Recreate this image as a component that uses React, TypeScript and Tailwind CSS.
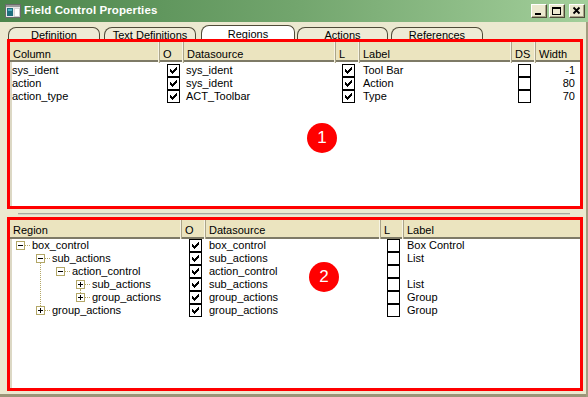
import React from "react";

type Row1 = { col: string; o: boolean; ds: string; l: boolean; label: string; dsb: boolean; width: string };

const columnRows: Row1[] = [
  { col: "sys_ident", o: true, ds: "sys_ident", l: true, label: "Tool Bar", dsb: false, width: "-1" },
  { col: "action", o: true, ds: "sys_ident", l: true, label: "Action", dsb: false, width: "80" },
  { col: "action_type", o: true, ds: "ACT_Toolbar", l: true, label: "Type", dsb: false, width: "70" },
];

type TreeRow = { level: number; open: boolean; name: string; ds: string; label: string };

const treeRows: TreeRow[] = [
  { level: 0, open: true, name: "box_control", ds: "box_control", label: "Box Control" },
  { level: 1, open: true, name: "sub_actions", ds: "sub_actions", label: "List" },
  { level: 2, open: true, name: "action_control", ds: "action_control", label: "" },
  { level: 3, open: false, name: "sub_actions", ds: "sub_actions", label: "List" },
  { level: 3, open: false, name: "group_actions", ds: "group_actions", label: "Group" },
  { level: 1, open: false, name: "group_actions", ds: "group_actions", label: "Group" },
];

const CHECK = ["......X", ".....XX", "X...XXX", "XX.XXX.", "XXXXX..", ".XXX...", "..X...."];

const Check = ({ on }: { on: boolean }) => (
  <span className="w-[13px] h-[13px] border border-black bg-white block">
    {on && (
      <svg width="11" height="11" viewBox="0 0 11 11" shapeRendering="crispEdges">
        {CHECK.flatMap((line, y) =>
          line.split("").map((c, x) => (c === "X" ? <rect key={`${x}-${y}`} x={x + 2} y={y + 2} width="1" height="1" fill="#000" /> : null))
        )}
      </svg>
    )}
  </span>
);

const Expander = ({ open }: { open: boolean }) => (
  <span className="w-[9px] h-[9px] border border-[#b3a767] bg-white relative block shrink-0">
    <span className="absolute left-[1px] top-[3px] w-[5px] h-[1px] bg-black" />
    {!open && <span className="absolute left-[3px] top-[1px] w-[1px] h-[5px] bg-black" />}
  </span>
);

const HeadCell = ({ children, last, pt = "pt-[1px]" }: { children?: React.ReactNode; last?: boolean; pt?: string }) => (
  <div className={`h-full flex items-center pl-[3px] ${pt} ${last ? "" : "border-r border-[#aba489] shadow-[inset_-1px_0_0_#f7f4e4]"}`}>
    {children}
  </div>
);

const Tab = ({ label, w, active }: { label: string; w: string; active?: boolean }) => (
  <div
    className={`${w} flex justify-center border border-b-0 border-[#4f4b38] rounded-tl-[8px] rounded-tr-[7px] ${
      active ? "h-[14px] bg-white pt-[2px]" : "h-[12px] bg-[#eeebd6] pt-[1px]"
    }`}
  >
    <span className="leading-[12px]">{label}</span>
  </div>
);

const TitleButton = ({ children }: { children: React.ReactNode }) => (
  <div className="w-[16px] h-[14px] bg-[#ece9d0] border border-t-white border-l-white border-r-[#4e4b3a] border-b-[#4e4b3a] shadow-[inset_-1px_-1px_0_#a9a487] relative">
    {children}
  </div>
);

export default function App() {
  return (
    <div className="w-[588px] h-[397px] overflow-hidden relative bg-[#ece9d0] text-[11px] text-black font-['Liberation_Sans',Arial,sans-serif] flex flex-col">
      {/* title bar */}
      <div className="h-[22px] shrink-0 flex items-center bg-gradient-to-r from-[#4b854b] via-[#72a56d] to-[#a3cf9b]">
        <svg width="16" height="14" viewBox="0 0 16 14" className="ml-[5px]" shapeRendering="crispEdges">
          <rect x="0.5" y="0.5" width="15" height="13" fill="#e8e8e8" stroke="#6a6a6a" />
          <rect x="1" y="1" width="14" height="2" fill="#9a9a9a" />
          <rect x="2" y="4" width="6" height="8" fill="#1f6f7d" />
          <rect x="3" y="5" width="4" height="2" fill="#4fb0c0" />
          <rect x="9" y="4" width="5" height="8" fill="#ffffff" stroke="#b0b0b0" strokeWidth="0.5" />
        </svg>
        <span className="ml-[3px] text-white font-bold text-[11.5px] tracking-[0.1px]">Field Control Properties</span>
        <div className="ml-auto mr-[3px] flex items-center gap-[2px]">
          <TitleButton>
            <span className="absolute left-[3px] top-[8px] w-[6px] h-[2px] bg-black" />
          </TitleButton>
          <TitleButton>
            <span className="absolute left-[2px] top-[2px] w-[9px] h-[8px] border border-black border-t-2" />
          </TitleButton>
          <div className="ml-[2px]">
            <TitleButton>
              <svg width="14" height="12" viewBox="0 0 14 12" className="absolute left-0 top-0">
                <path d="M3.5 2.5 L9.5 8.5 M9.5 2.5 L3.5 8.5" stroke="#000" strokeWidth="1.8" />
              </svg>
            </TitleButton>
          </div>
        </div>
      </div>

      {/* tabs */}
      <div className="h-[17px] shrink-0 flex items-end pl-[8px]">
        <Tab label="Definition" w="w-[92px]" />
        <div className="w-[4px]" />
        <Tab label="Text Definitions" w="w-[92px]" />
        <div className="w-[5px]" />
        <Tab label="Regions" w="w-[94px]" active />
        <div className="w-[2px]" />
        <Tab label="Actions" w="w-[91px]" />
        <div className="w-[3px]" />
        <Tab label="References" w="w-[92px]" />
      </div>

      {/* region 1: columns list */}
      <div className="ml-[7px] w-[576px] h-[170px] shrink-0 border-[3px] border-[#ff0000] bg-white flex flex-col relative z-10">
        <div className="h-[20px] shrink-0 grid grid-cols-[150px_24px_152px_24px_152px_24px_44px] bg-[#ebe4bf] border-b-2 border-[#7e7a66]">
          <HeadCell pt="pt-[4px]">Column</HeadCell>
          <HeadCell pt="pt-[4px]">O</HeadCell>
          <HeadCell pt="pt-[4px]">Datasource</HeadCell>
          <HeadCell pt="pt-[4px]">L</HeadCell>
          <HeadCell pt="pt-[4px]">Label</HeadCell>
          <HeadCell pt="pt-[4px]">DS</HeadCell>
          <HeadCell pt="pt-[4px]" last>Width</HeadCell>
        </div>
        <div className="flex-1 pt-[2px] shadow-[inset_2px_0_0_#dcd8c4]">
          {columnRows.map((r, i) => (
            <div key={i} className="h-[13px] grid grid-cols-[150px_24px_152px_24px_152px_24px_44px] leading-[13px]">
              <span className="pl-[2px]">{r.col}</span>
              <span className="flex justify-center pl-[3px]"><Check on={r.o} /></span>
              <span className="pl-[2px]">{r.ds}</span>
              <span className="flex justify-center"><Check on={r.l} /></span>
              <span className="pl-[3px]">{r.label}</span>
              <span className="flex justify-center pl-[1px]"><Check on={r.dsb} /></span>
              <span className="text-right pr-[5px]">{r.width}</span>
            </div>
          ))}
        </div>
      </div>

      {/* splitter */}
      <div className="h-[8px] shrink-0 pt-[4px]">
        <div className="ml-[18px] w-[552px] h-[1px] bg-[#a9a79c]" />
        <div className="ml-[18px] w-[552px] h-[1px] bg-[#d6d4c8]" />
      </div>

      {/* region 2: tree */}
      <div className="ml-[7px] w-[576px] h-[174px] shrink-0 border-[3px] border-[#ff0000] bg-white flex flex-col">
        <div className="h-[19px] shrink-0 grid grid-cols-[172px_24px_175px_23px_176px] bg-[#ebe4bf] border-b-2 border-[#7e7a66]">
          <HeadCell pt="pt-[2px]">Region</HeadCell>
          <HeadCell pt="pt-[2px]">O</HeadCell>
          <HeadCell pt="pt-[2px]">Datasource</HeadCell>
          <HeadCell pt="pt-[2px]">L</HeadCell>
          <HeadCell pt="pt-[2px]" last>Label</HeadCell>
        </div>
        <div className="flex-1 relative shadow-[inset_2px_0_0_#dcd8c4]">
          {/* tree lines */}
          <span className="absolute left-[30px] top-[24px] h-[43px] border-l border-dotted border-[#b3a767]" />
          <span className="absolute left-[70px] top-[50px] h-[4px] border-l border-dotted border-[#b3a767]" />
          {treeRows.map((r, i) => (
            <div key={i} className="h-[13px] grid grid-cols-[172px_24px_175px_23px_176px] leading-[13px]">
              <span className="flex items-center" style={{ paddingLeft: 6 + r.level * 20 }}>
                <Expander open={r.open} />
                <span className="w-[5px] border-t border-dotted border-[#b3a767]" />
                <span className="ml-[2px]">{r.name}</span>
              </span>
              <span className="flex justify-center pl-[2px]"><Check on /></span>
              <span className="pl-[3px]">{r.ds}</span>
              <span className="flex justify-center pl-[1px]"><Check on={false} /></span>
              <span className="pl-[3px]">{r.label}</span>
            </div>
          ))}
        </div>
      </div>

      <div className="flex-1 border-b-[3px] border-[#9b9578]" />
      <div className="absolute right-0 top-[22px] bottom-0 w-[2px] bg-[#a39d80]" />

      {/* annotation markers */}
      <div className="absolute left-[307px] top-[123px] w-[30px] h-[30px] rounded-full bg-[#ff0000] text-white text-[17px] flex items-center justify-center z-20">1</div>
      <div className="absolute left-[309px] top-[262px] w-[30px] h-[30px] rounded-full bg-[#ff0000] text-white text-[17px] flex items-center justify-center z-20">2</div>
    </div>
  );
}
